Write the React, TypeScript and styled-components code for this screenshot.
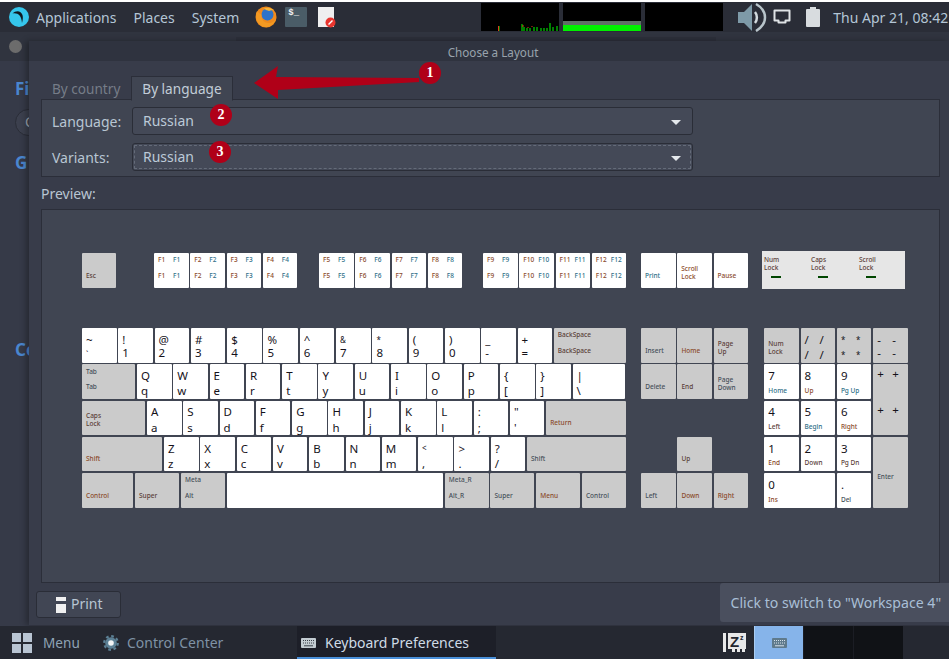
import React from 'react';
import styled, { createGlobalStyle } from 'styled-components';

const STEP = 36.3;
const GAP = 1.75;

const GlobalStyle = createGlobalStyle`
  html, body {
    margin: 0;
    padding: 0;
    background: #ffffff;
    overflow: hidden;
  }
  * {
    box-sizing: border-box;
  }
`;

interface KeyDef {
  u?: number;
  gray?: boolean;
  big?: boolean;
  tl?: string;
  tr?: string;
  bl?: string;
  br?: string;
  stack?: string[];
  lift?: number;
  rows?: string;
  tone?: string;
  area?: string;
}

const TEAL = '#2f6f88';
const RUST = '#8a4a2a';
const SLATE = '#454f59';
const UMBER = '#5a4038';

const fnKey = (n: number): KeyDef => ({ tl: `F${n}`, tr: `F${n}`, bl: `F${n}`, br: `F${n}`, tone: 'fn' });
const pair = (top: string, low: string): KeyDef => ({ tl: top, bl: low, big: true });
const grayKey = (label: string, u = 1, tone = UMBER): KeyDef => ({ bl: label, gray: true, u, tone });

const rows: KeyDef[][] = [
  [
    pair('~', '`'), pair('!', '1'), pair('@', '2'), pair('#', '3'), pair('$', '4'), pair('%', '5'), pair('^', '6'),
    pair('&', '7'), pair('*', '8'), pair('(', '9'), pair(')', '0'), pair('_', '-'), pair('+', '='),
    { tl: 'BackSpace', bl: 'BackSpace', gray: true, u: 2.03, tone: UMBER },
  ],
  [
    { tl: 'Tab', bl: 'Tab', gray: true, u: 1.515, tone: SLATE },
    pair('Q', 'q'), pair('W', 'w'), pair('E', 'e'), pair('R', 'r'), pair('T', 't'), pair('Y', 'y'), pair('U', 'u'),
    pair('I', 'i'), pair('O', 'o'), pair('P', 'p'), pair('{', '['), pair('}', ']'),
    { ...pair('|', '\\'), u: 1.5 },
  ],
  [
    { stack: ['Caps', 'Lock'], gray: true, u: 1.79, tone: UMBER },
    pair('A', 'a'), pair('S', 's'), pair('D', 'd'), pair('F', 'f'), pair('G', 'g'), pair('H', 'h'), pair('J', 'j'),
    pair('K', 'k'), pair('L', 'l'), pair(':', ';'), pair('"', "'"),
    grayKey('Return', 2.25, RUST),
  ],
  [
    grayKey('Shift', 2.26, RUST),
    pair('Z', 'z'), pair('X', 'x'), pair('C', 'c'), pair('V', 'v'), pair('B', 'b'), pair('N', 'n'), pair('M', 'm'),
    pair('<', ','), pair('>', '.'), pair('?', '/'),
    grayKey('Shift', 2.78, SLATE),
  ],
  [
    grayKey('Control', 1.46, RUST), grayKey('Super', 1.267, UMBER),
    { tl: 'Meta', bl: 'Alt', gray: true, u: 1.267, tone: SLATE },
    { u: 6 },
    { tl: 'Meta_R', bl: 'Alt_R', gray: true, u: 1.26, tone: SLATE },
    grayKey('Super', 1.26, SLATE), grayKey('Menu', 1.26, RUST), grayKey('Control', 1.26, SLATE),
  ],
];

const navKeys: KeyDef[] = [
  grayKey('Insert', 1, SLATE), grayKey('Home', 1, RUST),
  { stack: ['Page', 'Up'], gray: true, tone: UMBER },
  grayKey('Delete', 1, SLATE), grayKey('End', 1, UMBER),
  { stack: ['Page', 'Down'], gray: true, tone: SLATE },
  { ...grayKey('Up', 1, UMBER), area: '4 / 2' },
  { ...grayKey('Left', 1, SLATE), area: '5 / 1' },
  { ...grayKey('Down', 1, RUST), area: '5 / 2' },
  { ...grayKey('Right', 1, RUST), area: '5 / 3' },
];

const num = (digit: string, label: string, tone: string, area?: string): KeyDef => ({ tl: digit, bl: label, tone, area });

const padKeys: KeyDef[] = [
  { stack: ['Num', 'Lock'], gray: true, tone: UMBER },
  { tl: '/', tr: '/', bl: '/', br: '/', gray: true, big: true },
  { tl: '*', tr: '*', bl: '*', br: '*', gray: true, big: true },
  { tl: '-', tr: '-', bl: '-', br: '-', gray: true, big: true },
  num('7', 'Home', TEAL), num('8', 'Up', RUST), num('9', 'Pg Up', TEAL),
  { tl: '+', tr: '+', bl: '+', br: '+', gray: true, big: true, rows: '36px 1fr', area: '2 / 4 / 4 / 4' },
  num('4', 'Left', UMBER), num('5', 'Begin', TEAL), num('6', 'Right', RUST),
  num('1', 'End', RUST), num('2', 'Down', UMBER), num('3', 'Pg Dn', UMBER),
  { stack: ['Enter'], lift: 20, gray: true, tone: SLATE, area: '4 / 4 / 6 / 4' },
  num('0', 'Ins', RUST, '5 / 1 / 5 / 3'),
  num('.', 'Del', SLATE),
];

const AppLogo = () => (
  <svg width="20" height="20" viewBox="0 0 20 20">
    <circle cx="10" cy="10" r="10" fill="#35c6ec" />
    <path d="M3.5 6.5C7 3 12 3.5 13.5 8c.6 2 .4 5-.5 8-.3-3-.9-6-2.4-7.6C9 6.7 6.5 6 3.5 6.5z" fill="#10181f" />
  </svg>
);

const FirefoxIcon = () => (
  <svg width="22" height="22" viewBox="0 0 22 22">
    <circle cx="11" cy="11" r="10.5" fill="#ef8a1c" />
    <circle cx="12.5" cy="8.5" r="6" fill="#2c73c9" />
    <path d="M2 5c-2.5 6-.5 14 7.500 16 6 1 11-4 12-10-1.500 4-4.500 6.500-8.500 6C9 16.500 6 13.500 6.500 8.500 5 8 3.500 7 2 5z" fill="#f39a22" />
    <path d="M9 2.500c3-1.500 7-1 10 2-2-.5-3.500-.5-5 .5-1-.5-3.500-1-5-2.500z" fill="#f6b73c" />
  </svg>
);

const NoteIcon = () => (
  <svg width="19" height="21" viewBox="0 0 19 21">
    <rect x="0" y="0" width="16" height="20" fill="#efefef" />
    <circle cx="12.500" cy="15.500" r="5" fill="#e8352e" />
    <path d="M10.500 17.500l4-4" stroke="#ffffff" strokeWidth="1.500" />
  </svg>
);

const VolumeIcon = () => (
  <svg width="30" height="30" viewBox="0 0 30 30">
    <path d="M1 10h6l8-8v27l-8-8H1z" fill="#7e9aa8" />
    <path d="M18 10c2.500 3 2.500 8 0 11" fill="none" stroke="#d4dbdf" strokeWidth="2.500" />
    <path d="M19 2c7 4 9 8 9 13.500S25.500 25 19 29" fill="none" stroke="#b8c4ca" strokeWidth="2.500" />
  </svg>
);

const ScreenIcon = () => (
  <svg width="18" height="18" viewBox="0 0 18 18">
    <path d="M1.500 2.500h15v10h-4v2h-7v-2h-4z" fill="none" stroke="#dfe3e6" strokeWidth="2" strokeLinejoin="round" />
  </svg>
);

const BatteryIcon = () => (
  <svg width="14" height="20" viewBox="0 0 14 20">
    <path d="M4 0h6v2h3a1 1 0 0 1 1 1v16a1 1 0 0 1-1 1H1a1 1 0 0 1-1-1V3a1 1 0 0 1 1-1h3z" fill="#d8dcdf" />
  </svg>
);

const KeyboardIcon = ({ color, dot }: { color: string; dot: string }) => (
  <svg width="15" height="10" viewBox="0 0 15 10">
    <rect width="15" height="10" rx="1" fill={color} />
    <path d="M2 2.500h11M2 5h11" stroke={dot} strokeWidth="1" strokeDasharray="1 1" />
    <path d="M3 7.800h9" stroke={dot} strokeWidth="1" />
  </svg>
);

const GearIcon = () => (
  <svg width="16" height="16" viewBox="0 0 16 16">
    <circle cx="8" cy="8" r="5.800" fill="#5d8196" />
    <circle cx="8" cy="8" r="6.800" fill="none" stroke="#5d8196" strokeWidth="2.200" strokeDasharray="2.700 2.640" />
    <circle cx="8" cy="8" r="2.800" fill="#f2f4f5" />
  </svg>
);

const SleepIcon = () => (
  <svg width="24" height="21" viewBox="0 0 24 21">
    <path d="M0 1h3v19H0z" fill="#e8e8e8" />
    <path d="M5 1h18v16h-1v3h-3v-3h-2v3h-3v-3h-2v3h-3v-3H5z" fill="#e8e8e8" />
    <text x="7" y="15" fontFamily="'Liberation Sans', sans-serif" fontWeight="700" fontSize="15" fill="#22252e">Z</text>
    <text x="17" y="8" fontFamily="'Liberation Sans', sans-serif" fontWeight="700" fontSize="7" fill="#22252e">z</text>
  </svg>
);

const PrinterIcon = () => (
  <svg width="10" height="16" viewBox="0 0 10 16">
    <rect width="10" height="4" fill="#f0f0f0" />
    <rect y="7" width="10" height="9" fill="#f0f0f0" />
  </svg>
);

const Key: React.FC<{ def: KeyDef; width?: number }> = ({ def, width }) => {
  const { gray, big, tl, tr, bl, br, stack, lift, rows: keyRows, tone, area } = def;
  const tall = big || /^[0-9.]$/.test(tl || '');
  const style = width ? { width } : undefined;
  const isFn = tone === 'fn';
  const legend = (text: string | undefined, column: 'left' | 'right', row: 1 | 2) => {
    if (!text) return null;
    const large = big || (row === 1 && tall);
    const color = isFn ? (column === 'left' ? RUST : TEAL) : tone;
    return (
      <Legend
        $column={column === 'left' ? 1 : 2}
        $row={row}
        $large={large}
        $tiny={'&*<`'.includes(text)}
        $digit={big && row === 2 && /^[0-9=-]$/.test(text)}
        $top={!!keyRows}
        $color={color}
      >
        {text}
      </Legend>
    );
  };
  return (
    <KeyCap $gray={gray} $tall={tall} $area={area} $rows={keyRows} style={style}>
      {legend(tl, 'left', 1)}
      {legend(tr, 'right', 1)}
      {legend(bl, 'left', 2)}
      {legend(br, 'right', 2)}
      {stack && (
        <Stack $color={tone} $lift={lift}>
          {stack.map(line => (
            <div key={line}>{line}</div>
          ))}
        </Stack>
      )}
    </KeyCap>
  );
};

const keyWidth = (u = 1) => u * STEP - GAP;

const App: React.FC = () => (
  <>
    <GlobalStyle />
    <Page>
      <TopPanel>
        <LogoSlot>
          <AppLogo />
        </LogoSlot>
        <PanelMenu>Applications</PanelMenu>
        <PanelMenu>Places</PanelMenu>
        <PanelMenu>System</PanelMenu>
        <Launchers>
          <FirefoxIcon />
          <TerminalIcon>$_</TerminalIcon>
          <NoteIcon />
        </Launchers>
        <Monitors>
          <Monitor>
            <svg width="78" height="28" viewBox="0 0 78 28">
              <path d="M18 28v-5M41 28v-7M43 28v-4M46 28v-3M49 28v-3M53 28v-4M56 28v-4M60 28v-3M63 28v-3M66 28v-3M69 28v-8M72 28v-4M76 28v-5" stroke="#00ff00" strokeWidth="1" />
              <path d="M17.500 28v-5M42 24v-2M47 25v-1M51 24v-1" stroke="#e23a1c" strokeWidth="1" />
            </svg>
          </Monitor>
          <Monitor>
            <MemoryUsed />
            <MemoryFree />
          </Monitor>
          <Monitor />
        </Monitors>
        <StatusIcons>
          <VolumeIcon />
          <ScreenIcon />
          <BatteryIcon />
        </StatusIcons>
        <Clock>Thu Apr 21, 08:42</Clock>
      </TopPanel>

      <Desktop>
        <BackWindow>
          <BackTitle>
            <BackDot />
          </BackTitle>
          <BackHeading $top={17}>Fi</BackHeading>
          <BackPill>C</BackPill>
          <BackHeading $top={16}>G</BackHeading>
          <BackHeading $top={165}>Co</BackHeading>
        </BackWindow>
        <BackShade />

        <Dialog>
          <DialogTitle>Choose a Layout</DialogTitle>
          <DialogBody>
            <Tabs>
              <Tab>By country</Tab>
              <Tab $active>By language</Tab>
            </Tabs>
            <Frame>
              <FieldLabel>Language:</FieldLabel>
              <Combo>
                Russian
                <ComboArrow />
              </Combo>
              <FieldLabel>Variants:</FieldLabel>
              <Combo $focused>
                Russian
                <ComboArrow />
              </Combo>
            </Frame>
            <PreviewLabel>Preview:</PreviewLabel>
            <Preview>
              <FnRow>
                <Key def={grayKey('Esc', 1, UMBER)} width={34} />
                <FnGroup $offset={38}>
                  {[1, 2, 3, 4].map(n => (
                    <Key key={n} def={fnKey(n)} width={34.5} />
                  ))}
                </FnGroup>
                <FnGroup $offset={21.75}>
                  {[5, 6, 7, 8].map(n => (
                    <Key key={n} def={fnKey(n)} width={34.5} />
                  ))}
                </FnGroup>
                <FnGroup $offset={20.75}>
                  {[9, 10, 11, 12].map(n => (
                    <Key key={n} def={fnKey(n)} width={34.5} />
                  ))}
                </FnGroup>
                <FnGroup $offset={14.75}>
                  <Key def={{ bl: 'Print', tone: TEAL }} width={34.5} />
                  <Key def={{ stack: ['Scroll', 'Lock'], tone: RUST }} width={34.5} />
                  <Key def={{ bl: 'Pause', tone: RUST }} width={34.5} />
                </FnGroup>
                <Indicators>
                  {[['Num', 'Lock'], ['Caps', 'Lock'], ['Scroll', 'Lock']].map(lines => (
                    <Indicator key={lines[0]}>
                      <Stack as="div" $color={UMBER} $flow>
                        {lines.map(line => (
                          <div key={line}>{line}</div>
                        ))}
                      </Stack>
                      <Led />
                    </Indicator>
                  ))}
                </Indicators>
              </FnRow>
              <Clusters>
                <MainBlock>
                  {rows.map((row, r) => (
                    <KeyRow key={r}>
                      {row.map((def, i) => (
                        <Key key={i} def={def} width={keyWidth(def.u)} />
                      ))}
                    </KeyRow>
                  ))}
                </MainBlock>
                <NavBlock>
                  {navKeys.map((def, i) => (
                    <Key key={i} def={def} />
                  ))}
                </NavBlock>
                <PadBlock>
                  {padKeys.map((def, i) => (
                    <Key key={i} def={def} />
                  ))}
                </PadBlock>
              </Clusters>
            </Preview>
            <PrintButton>
              <PrinterIcon />
              <PrintLabel>Print</PrintLabel>
            </PrintButton>
          </DialogBody>
        </Dialog>

        <Annotation width="200" height="50" viewBox="0 0 200 50">
          <path d="M0 19L24 2 22 13 165 14 165 18 24 26 24 35z" fill="#b00018" />
        </Annotation>
        <Badge $x={419} $y={30}>1</Badge>
        <Badge $x={210} $y={72}>2</Badge>
        <Badge $x={209} $y={109}>3</Badge>
        <Tooltip>Click to switch to "Workspace 4"</Tooltip>
      </Desktop>

      <BottomPanel>
        <MenuButton>
          <MenuGrid>
            <i />
            <i />
            <i />
            <i />
          </MenuGrid>
          Menu
        </MenuButton>
        <TaskItem>
          <GearIcon />
          Control Center
        </TaskItem>
        <ActiveTask>
          <KeyboardIcon color="#c3ccd2" dot="#3a4049" />
          Keyboard Preferences
        </ActiveTask>
        <Tray>
          <SleepIcon />
          <Workspaces>
            <Workspace $active>
              <KeyboardIcon color="#5f7a8c" dot="#d7e2ea" />
            </Workspace>
            <Workspace />
            <Workspace />
          </Workspaces>
        </Tray>
      </BottomPanel>
    </Page>
  </>
);

const Page = styled.div`
  width: 949px;
  height: 659px;
  padding-top: 2px;
  display: flex;
  flex-direction: column;
  font-family: 'Noto Sans', sans-serif;
  font-size: 14px;
  overflow: hidden;
`;

const TopPanel = styled.div`
  height: 30px;
  flex: none;
  display: flex;
  align-items: center;
  background: #2a2d37;
  color: #b4c6d6;
`;

const LogoSlot = styled.div`
  display: flex;
  margin-left: 9px;
  margin-right: 7px;
`;

const PanelMenu = styled.div`
  margin-right: 17px;
  white-space: nowrap;
`;

const Launchers = styled.div`
  display: flex;
  align-items: center;
  gap: 8px;
  margin-left: -1px;
`;

const TerminalIcon = styled.div`
  width: 22px;
  height: 20px;
  background: #4a5c67;
  color: #f2f2f2;
  font-family: 'Liberation Mono', monospace;
  font-size: 9px;
  font-weight: 700;
  padding: 1px 0 0 3px;
  border-radius: 1px;
  margin-right: 3px;
`;

const Monitors = styled.div`
  display: flex;
  gap: 4px;
  margin-left: 144px;
  align-self: flex-start;
  padding-top: 1px;
`;

const Monitor = styled.div`
  width: 78px;
  height: 28px;
  background: #000000;
  display: flex;
  flex-direction: column;
  justify-content: flex-end;
`;

const MemoryUsed = styled.div`
  height: 4px;
  background: #5f6e66;
`;

const MemoryFree = styled.div`
  height: 6px;
  background: #00f000;
`;

const StatusIcons = styled.div`
  display: flex;
  align-items: center;
  margin-left: 14px;
  gap: 6px;
  & > svg:last-child {
    margin-left: 9px;
  }
`;

const Clock = styled.div`
  margin-left: 13px;
  white-space: nowrap;
`;

const Desktop = styled.div`
  position: relative;
  flex: 1;
  background: #363a48;
  overflow: hidden;
`;

const BackWindow = styled.div`
  display: flex;
  flex-direction: column;
`;

const BackTitle = styled.div`
  height: 29px;
  background: #30343f;
  display: flex;
  align-items: center;
  padding-left: 9px;
`;

const BackDot = styled.div`
  width: 13px;
  height: 13px;
  border-radius: 50%;
  background: #6c6c6c;
`;

const BackHeading = styled.div<{ $top: number }>`
  margin-top: ${props => props.$top}px;
  margin-left: 15px;
  font-size: 17px;
  line-height: 22px;
  font-weight: 700;
  color: #4a86cf;
`;

const BackPill = styled.div`
  width: 40px;
  height: 27px;
  margin: 9px 0 0 15px;
  border: 1px solid #2a2d37;
  border-radius: 14px;
  background: #3c404e;
  color: #a0a8b0;
  padding: 2px 0 0 9px;
`;

const BackShade = styled.div`
  position: absolute;
  left: 236px;
  top: 5px;
  width: 480px;
  height: 4px;
  background: #2c2f3a;
`;

const Dialog = styled.div`
  position: absolute;
  left: 29px;
  top: 9px;
  width: 920px;
  height: 584px;
  background: #383c4a;
  box-shadow: -3px 0 6px rgba(0, 0, 0, 0.3);
  display: flex;
  flex-direction: column;
`;

const DialogTitle = styled.div`
  height: 20px;
  flex: none;
  background: #2f333f;
  color: #99a3ad;
  font-size: 11.7px;
  line-height: 23px;
  text-align: center;
  padding-left: 8px;
`;

const DialogBody = styled.div`
  flex: 1;
  padding: 15px 9px 0 12px;
  display: flex;
  flex-direction: column;
`;

const Tabs = styled.div`
  display: flex;
  height: 24px;
  flex: none;
  margin-bottom: -1px;
  position: relative;
`;

const Tab = styled.div<{ $active?: boolean }>`
  padding: 0 10px;
  height: 25px;
  line-height: 23px;
  font-size: 13.6px;
  white-space: nowrap;
  color: ${props => (props.$active ? '#c2cdd8' : '#767d88')};
  background: ${props => (props.$active ? '#404552' : 'transparent')};
  border: 1px solid ${props => (props.$active ? '#2b2e39' : 'transparent')};
  border-bottom-color: ${props => (props.$active ? '#404552' : 'transparent')};
`;

const Frame = styled.div`
  height: 78px;
  flex: none;
  background: #404552;
  border: 1px solid #2b2e39;
  padding: 7px 0 0 10px;
  display: grid;
  grid-template-columns: 80px 561px;
  grid-auto-rows: 28px;
  row-gap: 8px;
  align-items: center;
  color: #b8c5d2;
`;

const FieldLabel = styled.div`
  white-space: nowrap;
`;

const Combo = styled.div<{ $focused?: boolean }>`
  position: relative;
  height: 28px;
  line-height: 26px;
  padding-left: 10px;
  background: #444957;
  border: 1px solid #2a2d37;
  border-radius: 3px;
  color: #bccad8;
  ${props => props.$focused && 'outline: 1px dashed #646b79; outline-offset: -3px;'}
`;

const ComboArrow = styled.div`
  position: absolute;
  right: 11px;
  top: 12px;
  width: 0;
  height: 0;
  border-left: 5px solid transparent;
  border-right: 5px solid transparent;
  border-top: 5px solid #e4e8ec;
`;

const PreviewLabel = styled.div`
  height: 32px;
  flex: none;
  line-height: 32px;
  padding-top: 1px;
  color: #b8c5d2;
`;

const Preview = styled.div`
  height: 374px;
  flex: none;
  background: #404552;
  border: 1px solid #2b2e39;
  padding: 43px 0 0 40px;
`;

const FnRow = styled.div`
  display: flex;
  height: 34.5px;
  margin-bottom: 40.5px;
`;

const FnGroup = styled.div<{ $offset: number }>`
  display: flex;
  gap: ${GAP}px;
  margin-left: ${props => props.$offset}px;
`;

const Indicators = styled.div`
  flex: none;
  align-self: center;
  width: 143px;
  height: 38px;
  margin-left: 14px;
  background: #e6e6e6;
  padding: 5px 0 0 2px;
  display: grid;
  grid-template-columns: 47px 48px 46px;
`;

const Indicator = styled.div`
  display: flex;
  flex-direction: column;
`;

const Led = styled.div`
  width: 10px;
  height: 2px;
  margin: 4px 0 0 7px;
  background: #004600;
`;

const Clusters = styled.div`
  display: flex;
`;

const MainBlock = styled.div`
  display: flex;
  flex-direction: column;
  gap: ${GAP}px;
`;

const KeyRow = styled.div`
  display: flex;
  gap: ${GAP}px;
  height: 34.5px;
`;

const NavBlock = styled.div`
  display: grid;
  grid-template-columns: repeat(3, 34.55px);
  grid-auto-rows: 34.5px;
  gap: ${GAP}px;
  margin-left: 15px;
  align-self: flex-start;
`;

const PadBlock = styled.div`
  display: grid;
  grid-template-columns: repeat(4, 34.55px);
  grid-auto-rows: 34.5px;
  gap: ${GAP}px;
  margin-left: 16px;
  align-self: flex-start;
`;

const KeyCap = styled.div<{ $gray?: boolean; $tall?: boolean; $area?: string; $rows?: string }>`
  position: relative;
  flex: none;
  background: ${props => (props.$gray ? '#cbcbcb' : '#ffffff')};
  border-radius: 1px;
  display: grid;
  grid-template-columns: 15px 1fr;
  grid-template-rows: ${props => props.$rows || '1fr 1fr'};
  padding: ${props => (props.$tall ? '4px 0 0 4px' : '0 0 4px 4px')};
  ${props => props.$area && `grid-area: ${props.$area};`}
`;

const Legend = styled.span<{
  $column: number;
  $row: number;
  $large?: boolean;
  $tiny?: boolean;
  $digit?: boolean;
  $top?: boolean;
  $color?: string;
}>`
  grid-column: ${props => props.$column};
  grid-row: ${props => props.$row};
  align-self: ${props => (props.$top ? 'start' : 'center')};
  white-space: nowrap;
  line-height: 1;
  font-size: ${props => (props.$tiny ? '8px' : props.$large ? '11.5px' : '6.5px')};
  font-weight: ${props => (props.$large ? 400 : 500)};
  color: ${props => (props.$large ? '#15121a' : props.$color || '#15121a')};
  ${props => props.$digit && 'margin-bottom: 4px;'}
`;

const Stack = styled.div<{ $color?: string; $flow?: boolean; $lift?: number }>`
  ${props =>
    props.$flow
      ? ''
      : `
    position: absolute;
    left: 4px;
    bottom: ${7 + (props.$lift || 0)}px;
  `}
  font-size: 6.5px;
  font-weight: 500;
  line-height: 8px;
  color: ${props => props.$color || '#555'};
`;

const PrintButton = styled.div`
  width: 85px;
  height: 27px;
  margin: 8px 0 0 -5px;
  flex: none;
  display: flex;
  align-items: center;
  gap: 5px;
  padding-left: 19px;
  background: #414654;
  border: 1px solid #2a2d37;
  border-radius: 3px;
  color: #b8c5d2;
`;

const PrintLabel = styled.span`
  margin-top: -2px;
`;

const Annotation = styled.svg`
  position: absolute;
  left: 254px;
  top: 32px;
`;

const Badge = styled.div<{ $x: number; $y: number }>`
  position: absolute;
  left: ${props => props.$x}px;
  top: ${props => props.$y}px;
  width: 22px;
  height: 22px;
  border-radius: 50%;
  background: #b00018;
  color: #ffffff;
  font-family: 'Liberation Serif', serif;
  font-weight: 700;
  font-size: 14px;
  line-height: 22px;
  text-align: center;
`;

const Tooltip = styled.div`
  position: absolute;
  left: 720px;
  top: 551px;
  width: 235px;
  height: 39px;
  padding-left: 10.5px;
  line-height: 39px;
  font-size: 14.1px;
  background: #4a4f5e;
  border-radius: 3px;
  color: #a9bfd6;
  white-space: nowrap;
`;

const BottomPanel = styled.div`
  height: 33px;
  flex: none;
  margin-top: -1px;
  position: relative;
  display: flex;
  align-items: stretch;
  background: #252831;
  color: #8fa3b5;
`;

const MenuButton = styled.div`
  display: flex;
  align-items: center;
  gap: 11px;
  padding-left: 12px;
  width: 103px;
  font-size: 13.6px;
`;

const MenuGrid = styled.div`
  display: grid;
  grid-template-columns: 9px 9px;
  grid-auto-rows: 9px;
  gap: 2px;
  & > i {
    background: #b8c4d2;
  }
`;

const TaskItem = styled.div`
  display: flex;
  align-items: center;
  gap: 8px;
  width: 194px;
  color: #7f92a5;
`;

const ActiveTask = styled.div`
  display: flex;
  align-items: center;
  gap: 9px;
  width: 199px;
  padding: 2px 0 0 4px;
  background: #1d1f28;
  border-bottom: 2px solid #4a90d9;
  color: #cfdbe6;
`;

const Tray = styled.div`
  display: flex;
  align-items: center;
  margin-left: 227px;
  gap: 7px;
`;

const Workspaces = styled.div`
  display: flex;
  align-self: stretch;
`;

const Workspace = styled.div<{ $active?: boolean }>`
  width: ${props => (props.$active ? 49 : 50)}px;
  display: flex;
  align-items: center;
  justify-content: center;
  background: ${props => (props.$active ? '#86b4ea' : '#101216')};
  border-left: 1px solid ${props => (props.$active ? '#a9cdf2' : '#1b1d24')};
`;

export default App;
